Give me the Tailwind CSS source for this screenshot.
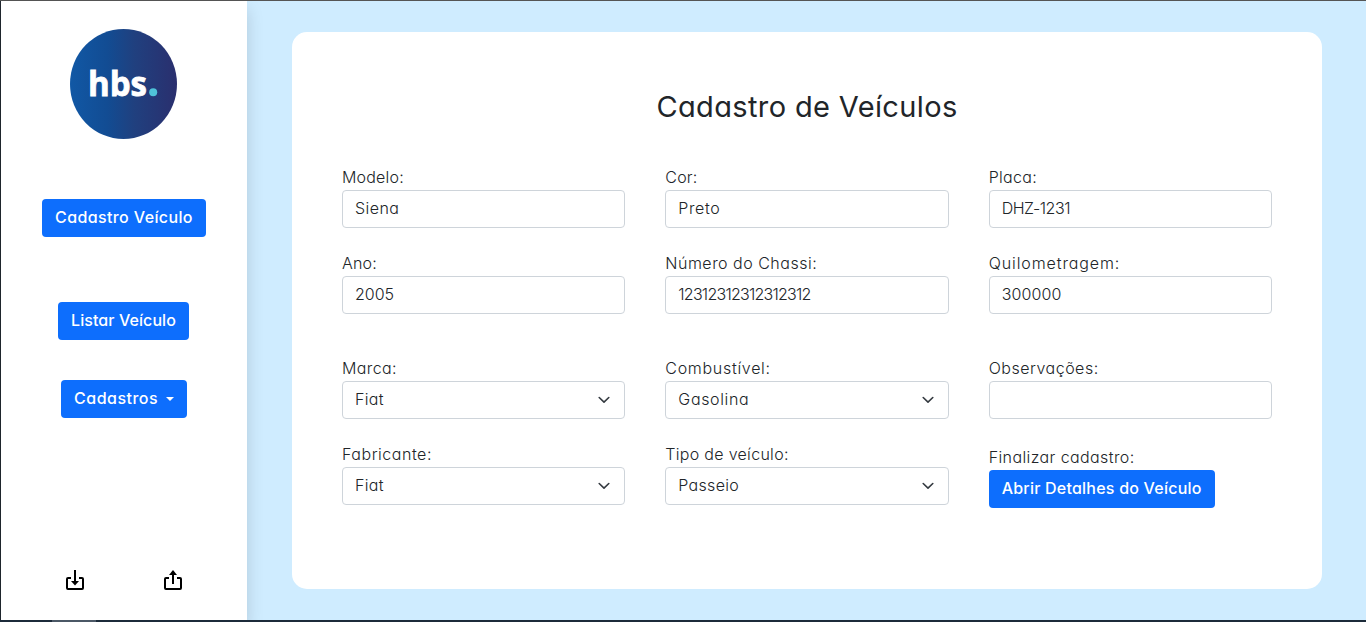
<!DOCTYPE html>
<html lang="pt-BR">
<head>
<meta charset="utf-8">
<title>Cadastro de Veículos</title>
<script src="https://cdn.jsdelivr.net/npm/@tailwindcss/browser@4"></script>
</head>
<body class="h-[622px] overflow-hidden">
<div class="h-full flex flex-col font-['Inter',sans-serif] text-base leading-6 text-[#212529] [font-feature-settings:'cv11'] whitespace-nowrap">
  <div class="h-px shrink-0 bg-[#555555]"></div>
  <div class="flex-1 min-h-0 flex border-l border-[#212830] bg-[#cfecff]">

    <aside class="w-[246px] shrink-0 bg-white shadow-[0_8px_16px_rgba(0,0,0,0.15)] flex flex-col items-center pt-7 pb-7">
      <svg class="w-[108px] h-[110px]" viewBox="0 0 108 110">
        <defs>
          <linearGradient id="logo" x1="0" y1="0" x2="1" y2="0">
            <stop offset="0" stop-color="#1158a5"/>
            <stop offset="0.35" stop-color="#124c93"/>
            <stop offset="0.6" stop-color="#20407f"/>
            <stop offset="1" stop-color="#2a2f6e"/>
          </linearGradient>
        </defs>
        <ellipse cx="53.5" cy="55" rx="53.5" ry="55" fill="url(#logo)"/>
        <text x="18" y="66.8" textLength="59" lengthAdjust="spacingAndGlyphs" fill="#fff" stroke="#fff" stroke-width="0.8" font-family="Open Sans, sans-serif" font-weight="700" font-size="33.5">hbs</text>
        <circle cx="83.2" cy="63.3" r="4" fill="#4fc3d9"/>
      </svg>
      <button class="mt-[60px] w-[164px] h-[38px] pb-0.5 rounded bg-[#0d6efd] text-white font-[450] tracking-[0.38px]">Cadastro Veículo</button>
      <button class="mt-[65px] mr-px w-[131px] h-[38px] pb-0.5 rounded bg-[#0d6efd] text-white font-[450] tracking-[0.08px]">Listar Veículo</button>
      <button class="mt-10 w-[126px] h-[38px] pb-0.5 rounded bg-[#0d6efd] text-white font-[450] tracking-[0.5px] flex items-center px-[13px]">Cadastros<span class="ml-2 mt-px border-x-4 border-x-transparent border-t-4 border-t-white"></span></button>
      <div class="mt-auto flex gap-[74px]">
        <svg class="size-6" viewBox="0 0 24 24" fill="none" stroke="#000" stroke-width="2">
          <path d="M8 10H5Q4 10 4 11V20Q4 21 5 21H19Q20 21 20 20V11Q20 10 19 10H16M12 2V14"/>
          <path d="M8 13H16L12 17.5Z" fill="#000" stroke="none"/>
        </svg>
        <svg class="size-6" viewBox="0 0 24 24" fill="none" stroke="#000" stroke-width="2">
          <path d="M8 10H5Q4 10 4 11V20Q4 21 5 21H19Q20 21 20 20V11Q20 10 19 10H16M12 5V16"/>
          <path d="M8 7H16L12 2Z" fill="#000" stroke="none"/>
        </svg>
      </div>
    </aside>

    <main class="flex-1 pl-[45px] pr-11 pt-[31px] pb-[31px]">
      <section class="h-full rounded-[15px] bg-white px-[50px] pt-[58px]">
        <h3 class="text-center text-[29px] leading-[34px] font-[370] tracking-[0.36px]">Cadastro de Veículos</h3>
        <div class="mt-[42px] grid grid-cols-3 gap-x-10 font-[330]">
          <div>
            <label class="block leading-[22px] mb-0.5 tracking-[0.2px]">Modelo:</label>
            <div class="h-[38px] rounded border border-[#ced4da] px-3 py-[5px] tracking-[0.42px]">Siena</div>
          </div>
          <div>
            <label class="block leading-[22px] mb-0.5 tracking-[0.15px]">Cor:</label>
            <div class="h-[38px] rounded border border-[#ced4da] px-3 py-[5px] tracking-[0.6px]">Preto</div>
          </div>
          <div>
            <label class="block leading-[22px] mb-0.5 tracking-[0.3px]">Placa:</label>
            <div class="h-[38px] rounded border border-[#ced4da] px-3 py-[5px] tracking-[-0.46px]">DHZ-1231</div>
          </div>
          <div class="mt-6">
            <label class="block leading-[22px] mb-0.5 tracking-[0.2px]">Ano:</label>
            <div class="h-[38px] rounded border border-[#ced4da] px-3 py-[5px]">2005</div>
          </div>
          <div class="mt-6">
            <label class="block leading-[22px] mb-0.5 tracking-[0.5px]">Número do Chassi:</label>
            <div class="h-[38px] rounded border border-[#ced4da] px-3 py-[5px] tracking-[-0.76px]">12312312312312312</div>
          </div>
          <div class="mt-6">
            <label class="block leading-[22px] mb-0.5 tracking-[0.9px]">Quilometragem:</label>
            <div class="h-[38px] rounded border border-[#ced4da] px-3 py-[5px] tracking-[0.1px]">300000</div>
          </div>
          <div class="mt-[43px]">
            <label class="block leading-[22px] mb-0.5 tracking-[0.4px]">Marca:</label>
            <div class="h-[38px] rounded border border-[#ced4da] px-3 pb-0.5 flex items-center justify-between tracking-[0.3px]">Fiat
              <svg class="mt-0.5 w-4 h-3" viewBox="0 0 16 12" fill="none" stroke="#343a40" stroke-width="1.6" stroke-linecap="round" stroke-linejoin="round"><path d="M3.2 3.5l4.8 4.6 4.8-4.6"/></svg>
            </div>
          </div>
          <div class="mt-[43px]">
            <label class="block leading-[22px] mb-0.5 tracking-[0.7px]">Combustível:</label>
            <div class="h-[38px] rounded border border-[#ced4da] px-3 pb-0.5 flex items-center justify-between tracking-[0.65px]">Gasolina
              <svg class="mt-0.5 w-4 h-3" viewBox="0 0 16 12" fill="none" stroke="#343a40" stroke-width="1.6" stroke-linecap="round" stroke-linejoin="round"><path d="M3.2 3.5l4.8 4.6 4.8-4.6"/></svg>
            </div>
          </div>
          <div class="mt-[43px]">
            <label class="block leading-[22px] mb-0.5 tracking-[0.5px]">Observações:</label>
            <div class="h-[38px] rounded border border-[#ced4da]"></div>
          </div>
          <div class="mt-6">
            <label class="block leading-[22px] mb-0.5 tracking-[0.53px]">Fabricante:</label>
            <div class="h-[38px] rounded border border-[#ced4da] px-3 pb-0.5 flex items-center justify-between tracking-[0.3px]">Fiat
              <svg class="mt-0.5 w-4 h-3" viewBox="0 0 16 12" fill="none" stroke="#343a40" stroke-width="1.6" stroke-linecap="round" stroke-linejoin="round"><path d="M3.2 3.5l4.8 4.6 4.8-4.6"/></svg>
            </div>
          </div>
          <div class="mt-6">
            <label class="block leading-[22px] mb-0.5 tracking-[0.3px]">Tipo de veículo:</label>
            <div class="h-[38px] rounded border border-[#ced4da] px-3 pb-0.5 flex items-center justify-between tracking-[0.3px]">Passeio
              <svg class="mt-0.5 w-4 h-3" viewBox="0 0 16 12" fill="none" stroke="#343a40" stroke-width="1.6" stroke-linecap="round" stroke-linejoin="round"><path d="M3.2 3.5l4.8 4.6 4.8-4.6"/></svg>
            </div>
          </div>
          <div class="mt-[27px]">
            <label class="block leading-[22px] mb-0.5 tracking-[0.4px]">Finalizar cadastro:</label>
            <button class="block w-[226px] h-[38px] pb-0.5 rounded bg-[#0d6efd] text-white font-[450] tracking-[0.22px]">Abrir Detalhes do Veículo</button>
          </div>
        </div>
      </section>
    </main>
  </div>
  <div class="h-0.5 shrink-0 bg-[#1c2b3a] pl-[52px]"><div class="h-full w-11 bg-[#4b5866]"></div></div>
</div>
</body>
</html>
